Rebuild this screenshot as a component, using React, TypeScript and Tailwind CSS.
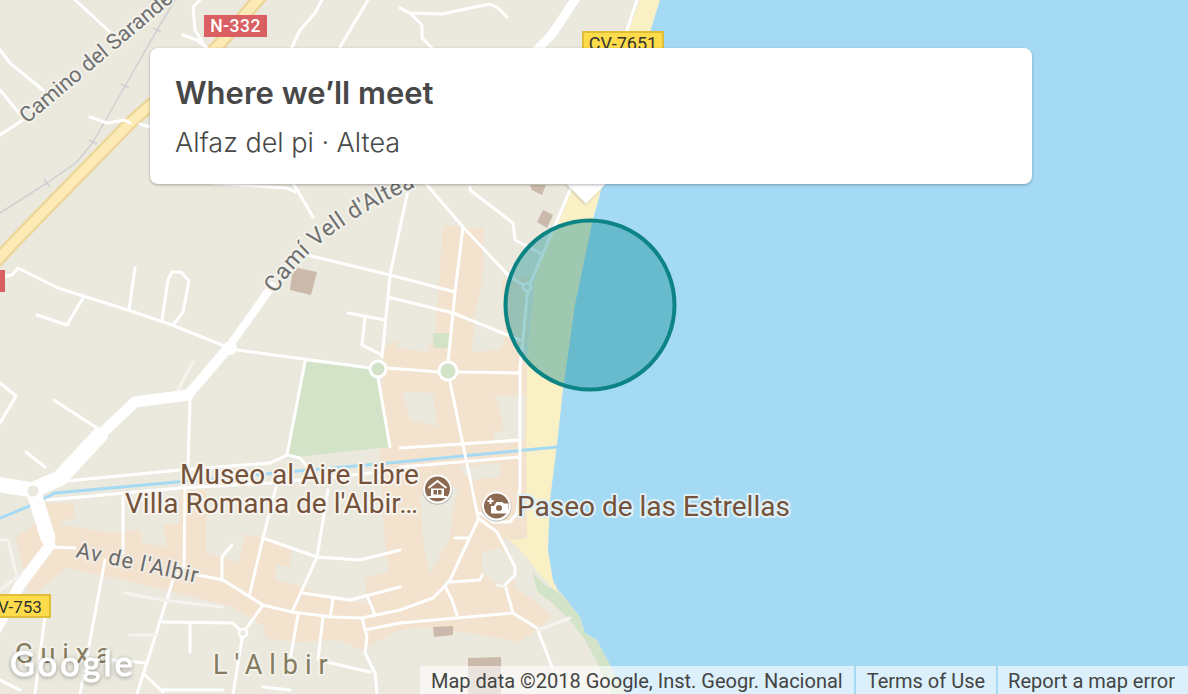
const LAND = "#ebe9de";
const SEA = "#a5daf4";
const SAND = "#faf0c6";
const URBAN = "#f2e2ce";
const PARK = "#d2e3c8";
const BUILDING = "#cbb9ab";

const urban: string[] = [
  "443,225 483,228 483,275 475,315 472,352 500,350 505,337 520,337 527,367 527,537 513,543 530,567 553,617 520,642 433,627 400,630 362,650 338,640 293,642 265,638 265,627 233,607 167,590 67,568 30,597 16,537 32,527 43,507 43,503 74,503 74,517 60,522 63,525 107,532 140,530 143,543 167,547 163,525 180,523 180,490 207,490 206,553 238,562 245,533 292,548 290,567 277,565 275,580 297,585 333,600 367,603 365,577 388,572 383,523 380,457 383,347 397,340 398,348 427,352 435,333",
  "502,280 530,275 527,345 505,340",
];

const holes: string[] = [
  "402,392 433,393 437,427 410,420",
  "495,397 525,395 525,440 503,445 503,420",
  "423,487 458,488 452,513 450,537 430,573 423,540 420,500",
  "458,467 500,463 500,477 470,480",
  "493,432 519,430 519,440 495,440",
  "482,553 500,548 515,563 515,575 507,583 497,583 482,573",
  "207,498 245,533 238,562 206,553",
  "207,490 380,460 383,523 388,572 365,577 367,603 333,600 297,585 275,580 277,565 290,567 292,548 245,533",
  "503,537 513,543 530,567 553,617 533,600 516,588",
];

const sand =
  "640,0 660,0 603,184 593,219 575,305 563,390 557,445 550,500 548,550 553,580 558,593 540,575 523,553 505,535 513,540 527,538 526,440 527,380 528,347 535,280 543,253 563,213 572,184";

const sea =
  "660,0 1188,0 1188,694 625,694 610,665 597,640 585,633 580,617 567,600 558,590 553,580 548,550 550,500 557,445 563,390 575,305 593,219 603,184";

const coastGreen =
  "532,572 545,585 558,592 567,600 580,617 585,633 597,640 610,665 625,694 612,694 600,668 585,640 568,618 552,603 538,592";

const parks: string[] = [
  "305,362 370,368 378,380 390,447 360,450 287,458",
  "433,333 450,333 450,348 433,348",
];

const buildings: string[] = [
  "293,267 317,272 311,295 290,290",
  "530,185 546,185 542,195 532,190",
  "537,222 543,210 553,215 547,228",
  "433,627 453,626 453,635 434,637",
  "468,658 501,657 501,694 468,694",
];

const roads: string[] = [
  "75,0 110,32",
  "0,50 10,63 43,90",
  "0,90 23,118",
  "0,135 23,120",
  "183,35 197,40 207,48",
  "200,0 193,7 195,30 203,43",
  "90,117 107,123 125,120 130,123",
  "140,124 150,127",
  "292,47 300,30 315,13 322,0",
  "340,47 368,0",
  "213,183 287,188 295,192",
  "293,183 313,217",
  "400,8 410,13 442,14 470,8 490,4 498,8 507,17",
  "410,13 422,25 422,38 432,48",
  "637,0 627,30 620,48",
  "570,190 550,237 533,277 528,287 523,340 520,367 520,487 517,513 510,522 493,522 480,513",
  "427,185 463,227 510,277 527,287",
  "470,187 470,190 513,223 515,240 540,253",
  "408,190 390,275 388,297 382,357",
  "303,254 390,275 455,292",
  "388,297 453,313 520,340",
  "463,227 455,292 453,313 448,362",
  "348,313 385,320",
  "365,318 362,345 382,355",
  "237,350 370,368",
  "305,362 287,455",
  "378,378 390,447",
  "387,368 440,372",
  "458,372 520,373",
  "450,382 478,517",
  "478,520 450,580 443,588 433,598 400,610",
  "478,518 497,532 515,567 515,575 505,585 513,613 537,628 552,667",
  "513,613 400,623",
  "446,588 452,600 457,615",
  "450,582 480,580 482,575",
  "455,538 468,538",
  "400,448 520,440",
  "400,467 520,457",
  "67,481 180,470 270,463 287,455 300,458 310,470",
  "47,500 180,488 270,483 400,470",
  "190,400 188,467",
  "185,488 184,567 173,580 137,694",
  "123,497 123,553",
  "105,560 80,694",
  "277,483 263,538 250,593",
  "263,538 317,557 360,560 400,550",
  "328,490 317,557 292,612",
  "198,575 223,580 263,605 292,612 333,617 362,618 400,610",
  "303,593 350,600 400,587",
  "333,600 330,617",
  "368,598 375,615",
  "298,615 290,660",
  "323,617 318,660 370,672",
  "362,618 367,637 365,653 375,673 377,694",
  "365,630 400,623",
  "263,605 243,633 233,694",
  "163,622 233,623 243,633",
  "232,545 222,557 222,580",
  "190,625 190,652",
  "47,600 35,694",
  "145,675 163,692",
  "113,660 147,663",
  "160,690 223,690",
  "263,687 290,690",
  "0,680 20,690",
  "5,276 12,275 18,268 58,288 128,310 172,325 227,347",
  "83,298 67,325 37,315",
  "135,268 129,310",
  "162,320 168,280 172,272 181,272 189,281 183,312 173,325",
  "0,383 16,396 0,423",
  "54,400 100,430",
  "26,452 45,467",
];

const paleRoads: string[] = [
  "193,362 178,390",
  "125,593 163,600 222,607",
  "130,635 157,635",
  "497,585 505,587",
  "538,630 570,618",
  "0,540 8,540 17,577 0,590",
];

const bigRoads: { points: string; width: number }[] = [
  { points: "578,-5 553,33 535,52", width: 9 },
  { points: "272,286 228,348", width: 8 },
  { points: "228,348 188,395", width: 10 },
  { points: "188,395 135,402 100,435", width: 11 },
  { points: "100,435 60,478 33,490", width: 16 },
  { points: "33,490 -5,484", width: 15 },
  { points: "33,490 48,538", width: 15 },
  { points: "50,545 20,585 -3,628", width: 11 },
  { points: "50,547 75,548", width: 3 },
];

const railTicks: string[] = ["153,28 161,32", "121,84 129,88", "89,140 97,144", "44,179 50,187"];

const Label = ({ x, y, size, angle, color, halo, spacing, children }: {
  x: number;
  y: number;
  size: number;
  angle?: number;
  color: string;
  halo: string;
  spacing?: number;
  children: string;
}) => (
  <text
    x={x}
    y={y}
    fontSize={size}
    fill={color}
    stroke={halo}
    strokeWidth={4}
    strokeLinejoin="round"
    letterSpacing={spacing}
    transform={angle ? `rotate(${angle} ${x} ${y})` : undefined}
    className="[paint-order:stroke]"
  >
    {children}
  </text>
);

const MapCanvas = () => (
  <svg viewBox="0 0 1188 694" className="absolute inset-0 h-full w-full font-['Roboto',sans-serif]">
    <rect width="1188" height="694" fill={LAND} />
    {urban.map((p) => (
      <polygon key={p} points={p} fill={URBAN} />
    ))}
    {holes.map((p) => (
      <polygon key={p} points={p} fill={LAND} />
    ))}
    {parks.map((p) => (
      <polygon key={p} points={p} fill={PARK} />
    ))}
    <polygon points={coastGreen} fill={PARK} />
    <polygon points={sand} fill={SAND} />
    <polygon points={sea} fill={SEA} />
    <polyline points="0,518 25,508 55,493 177,482 400,462 557,447" fill="none" stroke={SEA} strokeWidth="3" />

    {buildings.map((p) => (
      <polygon key={p} points={p} fill={BUILDING} />
    ))}

    <polyline points="175,0 157,30 125,86 93,142 77,162 47,183 0,213" fill="none" stroke="#cfcfd2" strokeWidth="1.5" />
    {railTicks.map((p) => (
      <polyline key={p} points={p} stroke="#cfcfd2" strokeWidth="1.5" />
    ))}

    <polyline points="262,-5 217,47 130,123 16,240 -10,268" fill="none" stroke="#ecd69c" strokeWidth="14" />
    <polyline points="262,-5 217,47 130,123 16,240 -10,268" fill="none" stroke="#fdebb5" strokeWidth="9" />

    <g fill="none" stroke="#fff" strokeWidth="3" strokeLinejoin="round" strokeLinecap="round">
      {roads.map((p) => (
        <polyline key={p} points={p} />
      ))}
      {paleRoads.map((p) => (
        <polyline key={p} points={p} stroke="#f4f3ee" />
      ))}
      {bigRoads.map((r) => (
        <polyline key={r.points} points={r.points} strokeWidth={r.width} />
      ))}
    </g>
    <circle cx="33" cy="491" r="5.5" fill={LAND} />
    <circle cx="230" cy="348" r="7" fill="#fff" />
    <circle cx="378" cy="369" r="8" fill={PARK} stroke="#fff" strokeWidth="3" />
    <circle cx="448" cy="371" r="9" fill={PARK} stroke="#fff" strokeWidth="3" />
    <circle cx="243" cy="633" r="4" fill={LAND} stroke="#fff" strokeWidth="2.5" />
    <circle cx="527" cy="287" r="4" fill={LAND} stroke="#fff" strokeWidth="2.5" />

    <Label x={27} y={124} size={21.5} angle={-40} color="#6f6f6f" halo="#f2f1ea">Camino del Sarande</Label>
    <path id="cami" d="M276 294 C300 255 340 220 422 184" fill="none" />
    <text fontSize={23} letterSpacing={0.5} fill="#6f6f6f" stroke="#f2f1ea" strokeWidth={4} strokeLinejoin="round" className="[paint-order:stroke]">
      <textPath href="#cami">Camí Vell d'Altea</textPath>
    </text>
    <Label x={75} y={557} size={22} angle={12} spacing={1} color="#6b6b6b" halo="#f2ece3">Av de l'Albir</Label>
    <Label x={180} y={484} size={28} color="#75533b" halo="#f8f4ee">Museo al Aire Libre</Label>
    <Label x={125} y={513} size={28} color="#75533b" halo="#f8f4ee">Villa Romana de l'Albir…</Label>
    <Label x={517} y={516} size={28} color="#75533b" halo="#dff0f7">Paseo de las Estrellas</Label>
    <Label x={15} y={663} size={27} color="#857b5e" halo="#f2f1ea" spacing={7}>Guixa</Label>
    <Label x={213} y={674} size={27} color="#857b5e" halo="#f2f1ea" spacing={7}>L'Albir</Label>

    <rect x="204" y="15" width="63" height="22" fill="#d95f62" />
    <text x="235.5" y="32" fontSize={17.5} fontWeight={500} letterSpacing={0.5} fill="#fff" textAnchor="middle">N-332</text>
    <rect x="-2" y="270" width="7" height="22" fill="#d95f62" />
    <rect x="583" y="32" width="80" height="24" fill="#fddb4a" stroke="#e0be38" strokeWidth="2" />
    <text x="623" y="50" fontSize={18} fill="#333" textAnchor="middle">CV-7651</text>
    <rect x="-12" y="595" width="62" height="22" fill="#fddb4a" stroke="#e0be38" strokeWidth="2" />
    <text x="-2" y="613" fontSize={17} fill="#333">V-753</text>

    <circle cx="437.5" cy="490" r="15" fill="#000" fillOpacity="0.18" />
    <circle cx="437.5" cy="489" r="13.5" fill="#8c6a52" stroke="#fff" strokeWidth="2" />
    <path d="M428.5 488 L437.5 481 L446.5 488" fill="none" stroke="#fff" strokeWidth="2" />
    <rect x="431" y="488.5" width="13" height="7.5" fill="#fff" />
    <rect x="433.5" y="490" width="8" height="4.5" fill="#8c6a52" />
    <rect x="437" y="490" width="1" height="4.5" fill="#fff" />
    <rect x="428" y="496" width="19" height="2" fill="#fff" />

    <circle cx="496.5" cy="507" r="15" fill="#000" fillOpacity="0.18" />
    <circle cx="496.5" cy="506" r="13.5" fill="#8c6a52" stroke="#fff" strokeWidth="2" />
    <path d="M491 506 H494 L496.5 502 H502 L504 503.5 H508.5 V513.5 H491 Z" fill="#fff" />
    <path d="M490.5 498 V504 M487.5 501 H493.5" stroke="#fff" strokeWidth="2" />
    <circle cx="499" cy="508" r="3" fill="#8c6a52" />

    <circle cx="590" cy="305" r="84.5" fill="#008489" fillOpacity="0.37" stroke="#0d8484" strokeWidth="4" />

    <text
      x="10"
      y="676"
      fontSize={34}
      letterSpacing={3.2}
      fill="#fff"
      stroke="#fff"
      strokeWidth={1.2}
      className="font-['Lato',sans-serif] drop-shadow-[0_1px_2px_rgba(0,0,0,0.35)]"
    >
      Google
    </text>
  </svg>
);

export default function App() {
  return (
    <div className="relative h-[694px] w-[1188px] overflow-hidden bg-[#a5daf4]">
      <MapCanvas />

      <div className="absolute left-[572px] top-[170px] h-[28px] w-[28px] rotate-45 bg-white shadow-[0_1px_3px_rgba(0,0,0,0.2)]" />
      <div className="absolute left-[150px] top-[48px] h-[136px] w-[882px] rounded-lg bg-white pl-[25px] pt-[25px] text-[#484848] shadow-[0_1px_3px_rgba(0,0,0,0.3)] font-['Inter',sans-serif]">
        <h2 className="text-[31px] font-semibold leading-[40px]">Where we’ll meet</h2>
        <p className="mt-[12px] text-[27px] font-light leading-[36px]">Alfaz del pi · Altea</p>
      </div>

      <div className="absolute bottom-0 right-0 flex h-[28px] gap-[2px] whitespace-nowrap text-[20px] leading-[30px] text-[#444] font-['Roboto',sans-serif]">
        <span className="bg-white/60 px-[11px]">Map data ©2018 Google, Inst. Geogr. Nacional</span>
        <span className="bg-white/60 px-[11px]">Terms of Use</span>
        <span className="bg-white/60 pl-[10px] pr-[13px]">Report a map error</span>
      </div>
    </div>
  );
}
